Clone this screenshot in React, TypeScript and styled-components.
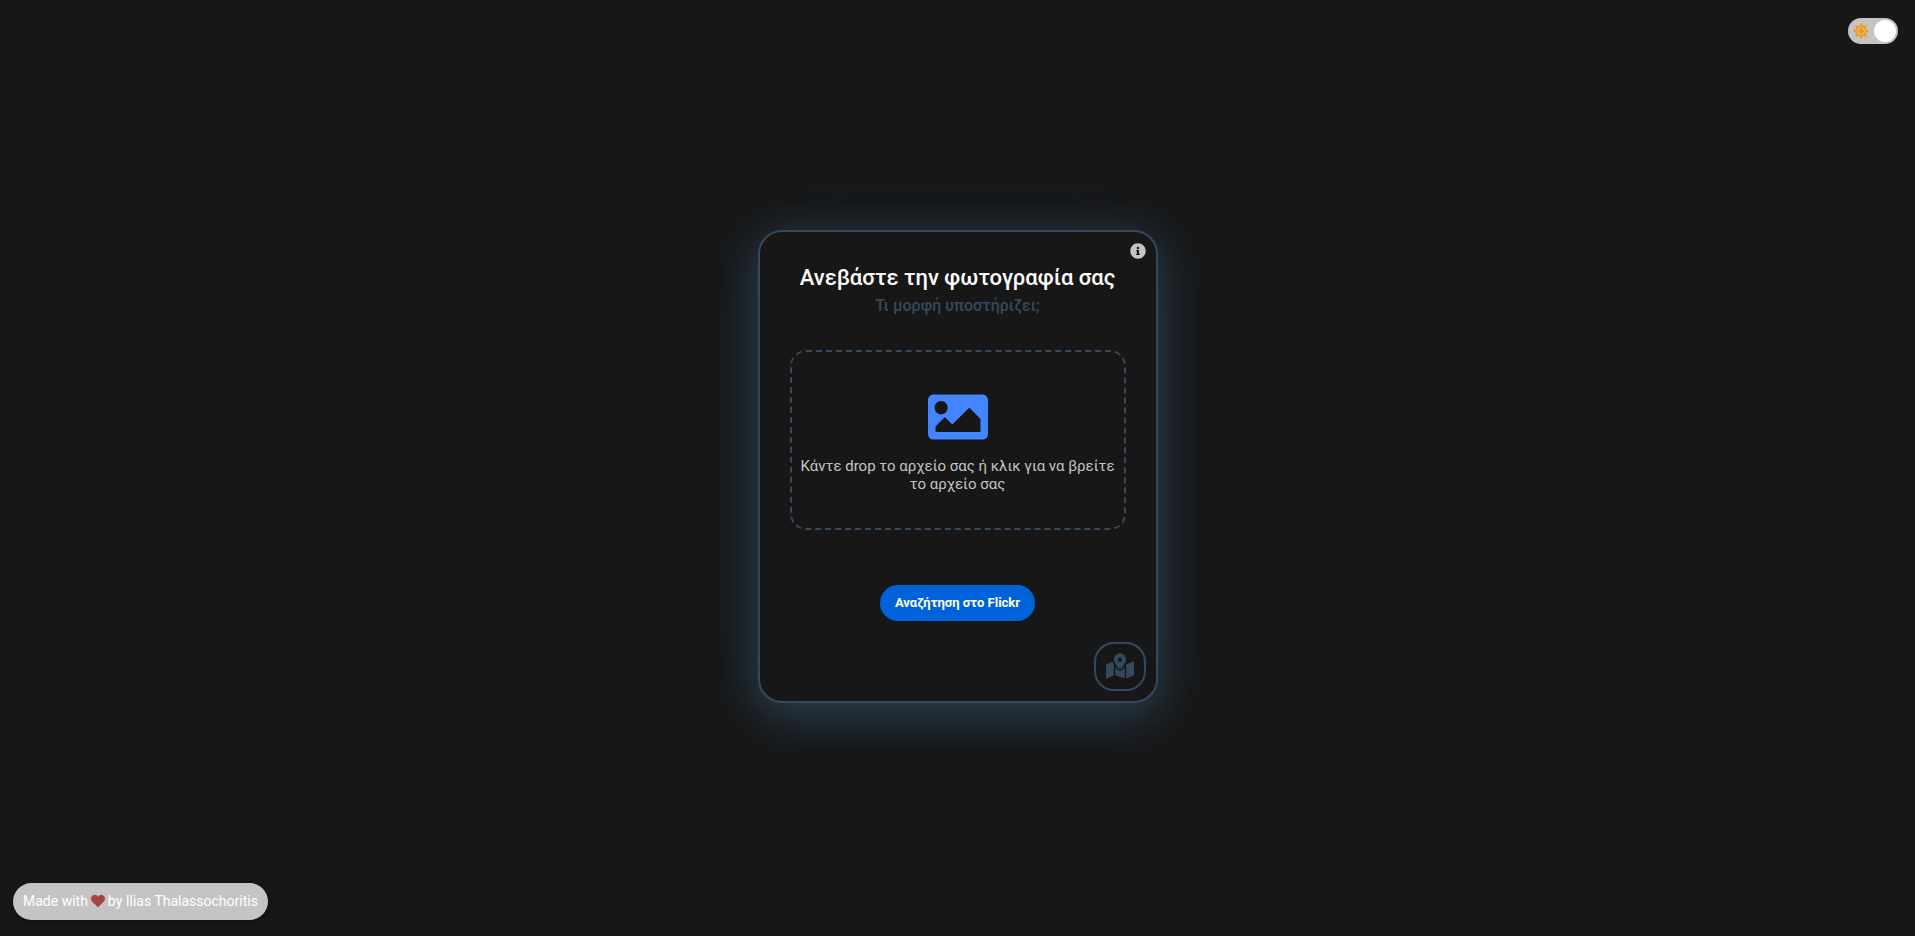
import React, { useState } from "react";
import styled, { createGlobalStyle } from "styled-components";
import { FaHeart, FaImage, FaInfoCircle, FaMapMarkedAlt, FaSun } from "react-icons/fa";

const slate = "#34495e";
const silver = "#c4c4c4";

const GlobalStyle = createGlobalStyle`
  *, *::before, *::after { box-sizing: border-box; }
  body {
    margin: 0;
    background: #171717;
    color: #fff;
    font-family: Roboto, "Liberation Sans", sans-serif;
  }
`;

const Page = styled.div`
  min-height: 100vh;
  display: grid;
  grid-template-rows: 1fr auto 1fr;
`;

const TopBar = styled.header`
  display: flex;
  justify-content: flex-end;
  align-items: flex-start;
  padding: 18px 17px;
`;

const Toggle = styled.label`
  display: flex;
  align-items: center;
  justify-content: space-between;
  width: 50px;
  height: 26px;
  padding: 0 2px 0 5px;
  border-radius: 50px;
  background: ${silver};
  color: #f39c12;
  font-size: 16px;
  cursor: pointer;
`;

const ToggleInput = styled.input`
  position: absolute;
  opacity: 0;
  margin: 0;
`;

const Knob = styled.span`
  width: 22px;
  height: 22px;
  border-radius: 50%;
  background: #fff;
`;

const Main = styled.main`
  display: flex;
  justify-content: center;
  padding-bottom: 4px;
`;

const Card = styled.section`
  display: flex;
  flex-direction: column;
  align-items: center;
  width: 400px;
  max-width: 100%;
  padding: 11px 10px 10px;
  border: 2px solid ${slate};
  border-radius: 24px;
  background: #171717;
  box-shadow: 0 10px 40px rgba(48, 73, 96, 0.65), 0 8px 70px rgba(48, 73, 96, 0.45);
`;

const InfoButton = styled.button`
  display: flex;
  align-self: flex-end;
  padding: 0;
  border: 0;
  background: none;
  color: ${silver};
  font-size: 16px;
  cursor: pointer;
`;

const Title = styled.h1`
  margin: 5px 0 0;
  font-size: 22px;
  font-weight: 500;
  line-height: 28px;
`;

const FormatLink = styled.a`
  margin-top: 4px;
  color: ${slate};
  font-size: 16px;
  font-weight: 500;
  line-height: 20px;
  text-decoration: none;
`;

const DropZone = styled.label`
  display: flex;
  flex-direction: column;
  align-items: center;
  justify-content: center;
  gap: 10px;
  width: 336px;
  max-width: 100%;
  height: 180px;
  margin-top: 34px;
  border: 2px dashed ${slate};
  border-radius: 16px;
  color: #c4c4c4;
  font-size: 15px;
  line-height: 18px;
  text-align: center;
  cursor: pointer;

  svg {
    color: #4285ff;
    font-size: 60px;
  }
`;

const SearchButton = styled.button`
  height: 36px;
  margin-top: 55px;
  padding: 0 15px;
  border: 0;
  border-radius: 18px;
  background: #0062db;
  color: #fff;
  font-family: inherit;
  font-size: 13px;
  font-weight: 700;
  cursor: pointer;
`;

const MapButton = styled.button`
  display: flex;
  align-items: center;
  justify-content: center;
  align-self: flex-end;
  width: 52px;
  height: 49px;
  margin-top: 21px;
  padding: 0;
  border: 2px solid ${slate};
  border-radius: 20px;
  background: none;
  color: ${slate};
  cursor: pointer;
`;

const Footer = styled.footer`
  display: flex;
  align-items: flex-end;
  padding: 0 13px 16px;
`;

const Credit = styled.p`
  display: flex;
  align-items: center;
  gap: 3px;
  height: 37px;
  margin: 0;
  padding: 0 10px 2px;
  border-radius: 19px;
  background: ${silver};
  box-shadow: 0 3px 6px rgba(0, 0, 0, 0.3);
  font-size: 14px;

  svg {
    color: #a94442;
  }
`;

const HiddenFile = styled.input`
  position: absolute;
  width: 1px;
  height: 1px;
  opacity: 0;
`;

export default function App() {
  const [dark, setDark] = useState(true);
  return (
    <>
      <GlobalStyle />
      <Page>
        <TopBar>
          <Toggle>
            <ToggleInput
              type="checkbox"
              aria-label="Dark mode"
              checked={dark}
              onChange={(e) => setDark(e.target.checked)}
            />
            <FaSun />
            <Knob />
          </Toggle>
        </TopBar>
        <Main>
          <Card>
            <InfoButton type="button" aria-label="Info">
              <FaInfoCircle />
            </InfoButton>
            <Title>Ανεβάστε την φωτογραφία σας</Title>
            <FormatLink href="#formats">Τι μορφή υποστήριζει;</FormatLink>
            <DropZone>
              <HiddenFile type="file" accept="image/*" />
              <FaImage />
              <span>Κάντε drop το αρχείο σας ή κλικ για να βρείτε το αρχείο σας</span>
            </DropZone>
            <SearchButton type="button">Αναζήτηση στο Flickr</SearchButton>
            <MapButton type="button" aria-label="Map">
              <FaMapMarkedAlt size={28} />
            </MapButton>
          </Card>
        </Main>
        <Footer>
          <Credit>
            <span>Made with</span>
            <FaHeart />
            <span>by Ilias Thalassochoritis</span>
          </Credit>
        </Footer>
      </Page>
    </>
  );
}
